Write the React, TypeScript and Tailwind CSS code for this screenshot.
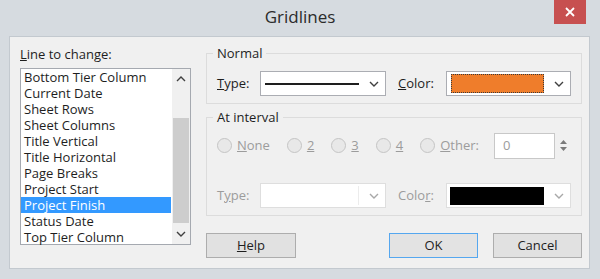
import React from 'react'

const items = [
  'Bottom Tier Column',
  'Current Date',
  'Sheet Rows',
  'Sheet Columns',
  'Title Vertical',
  'Title Horizontal',
  'Page Breaks',
  'Project Start',
  'Project Finish',
  'Status Date',
  'Top Tier Column',
]

function Chevron({ up = false, light = false }: { up?: boolean; light?: boolean }) {
  return (
    <svg width="10" height="6" viewBox="0 0 10 6" className={up ? 'rotate-180' : ''}>
      <path d="M1 1 L5 5 L9 1" fill="none" stroke={light ? '#a8a8a8' : '#404040'} strokeWidth="1.4" />
    </svg>
  )
}

function Radio({ u, rest }: { u: string; rest: string }) {
  return (
    <div className="flex items-center">
      <span className="w-[15px] h-[15px] rounded-full border border-[#c4c4c4] bg-[#e8e8e8]" />
      <span className="ml-[5px] text-[#9c9c9c]">
        <span className="underline">{u}</span>
        {rest}
      </span>
    </div>
  )
}

export default function App() {
  return (
    <div className="w-[600px] h-[279px] bg-[#d6dbe0] overflow-hidden flex flex-col text-[13px] text-[#1e1e1e] font-['Open_Sans',sans-serif]">
      {/* Title bar */}
      <div className="h-[36px] grid grid-cols-[1fr_auto_1fr] shrink-0">
        <div />
        <div className="pt-[6px] text-[17px] text-[#2b2b2b] leading-[22px]">Gridlines</div>
        <div className="flex justify-end pr-[14px]">
          <div className="w-[32px] h-[24px] bg-[#c75050] flex items-center justify-center">
            <svg width="10" height="10" viewBox="0 0 10 10">
              <path d="M1 1 L9 9 M9 1 L1 9" stroke="#fff" strokeWidth="1.8" />
            </svg>
          </div>
        </div>
      </div>

      {/* Client area */}
      <div className="ml-[9px] mr-[10px] h-[233px] bg-[#f0f0f0] border border-[#c3c9cf] flex pl-[10px] pr-[7px] gap-[15px]">
        {/* Left column */}
        <div className="w-[171px] flex flex-col">
          <div className="mt-[9px] h-[17px] leading-[17px]">
            <span className="underline">L</span>ine to change:
          </div>
          <div className="mt-[5px] h-[177px] border border-[#a5a9b0] bg-white flex">
            <div className="flex-1 flex flex-col">
              {items.map(it => (
                <div
                  key={it}
                  className={`h-[16px] leading-[16px] pl-[3px] ${it === 'Project Finish' ? 'bg-[#3399ff] text-white' : ''}`}
                >
                  {it}
                </div>
              ))}
            </div>
            <div className="w-[18px] ml-[1px] flex flex-col bg-[#f0f0f0]">
              <div className="h-[19px] flex items-center justify-center">
                <Chevron up />
              </div>
              <div className="h-[30px]" />
              <div className="h-[105px] bg-[#cdcdcd] mx-[1px]" />
              <div className="flex-1 flex items-center justify-center">
                <Chevron />
              </div>
            </div>
          </div>
        </div>

        {/* Right column */}
        <div className="w-[376px] flex flex-col">
          <fieldset className="mt-[8px] border border-[#dcdcdc] px-[10px] pt-[10px] pb-[7px]">
            <legend className="-ml-[4px] px-[4px] h-[16px] leading-[16px] text-[#1e1e1e]">Normal</legend>
            <div className="flex items-center">
              <div className="w-[43px]">
                <span className="underline">T</span>ype:
              </div>
              <div className="w-[126px] h-[25px] border border-[#abadb3] bg-white flex items-center pl-[4px] pr-[6px]">
                <div className="flex-1 h-[2px] bg-[#1e1e1e] mr-[10px]" />
                <Chevron />
              </div>
              <div className="ml-[12px] w-[48px]">
                <span className="underline">C</span>olor:
              </div>
              <div className="w-[125px] h-[25px] border border-[#abadb3] bg-white flex items-center pl-[4px] pr-[6px]">
                <div className="flex-1 h-[19px] bg-[#ef7d2b] border border-dotted border-[#3a3a3a] mr-[10px]" />
                <Chevron />
              </div>
            </div>
          </fieldset>

          <fieldset className="mt-[5px] border border-[#dcdcdc] pl-[10px] pr-[10px] pt-[8px] pb-[7px]">
            <legend className="-ml-[4px] px-[4px] h-[16px] leading-[16px] text-[#1e1e1e]">At interval</legend>
            <div className="flex items-center h-[25px]">
              <Radio u="N" rest="one" />
              <div className="ml-[17px]"><Radio u="2" rest="" /></div>
              <div className="ml-[17px]"><Radio u="3" rest="" /></div>
              <div className="ml-[17px]"><Radio u="4" rest="" /></div>
              <div className="ml-[17px]"><Radio u="O" rest="ther:" /></div>
              <div className="ml-[15px] w-[61px] h-[26px] border border-[#c8c8c8] bg-white flex items-center pl-[8px] text-[#9c9c9c]">
                0
              </div>
              <div className="ml-[2px] w-[13px] h-[24px] flex flex-col items-center justify-center gap-[3px]">
                <svg width="7" height="4" viewBox="0 0 7 4"><path d="M0 4 L3.5 0 L7 4Z" fill="#7a7a7a" /></svg>
                <svg width="7" height="4" viewBox="0 0 7 4"><path d="M0 0 L3.5 4 L7 0Z" fill="#7a7a7a" /></svg>
              </div>
            </div>
            <div className="flex items-center mt-[25px]">
              <div className="w-[43px] text-[#9c9c9c]">
                T<span className="underline">y</span>pe:
              </div>
              <div className="w-[126px] h-[25px] border border-[#dedede] bg-white flex items-center pl-[2px] pr-[6px]">
                <div className="flex-1 h-[19px] bg-white border-r border-[#ececec] mr-[10px]" />
                <Chevron light />
              </div>
              <div className="ml-[12px] w-[48px] text-[#9c9c9c]">
                Colo<span className="underline">r</span>:
              </div>
              <div className="w-[125px] h-[25px] border border-[#dedede] bg-white flex items-center pl-[3px] pr-[6px]">
                <div className="flex-1 h-[18px] bg-black mr-[10px]" />
                <Chevron light />
              </div>
            </div>
          </fieldset>

          <div className="mt-[17px] flex">
            <button className="w-[90px] h-[25px] border border-[#adadad] bg-[#e1e1e1] text-[#1e1e1e]">
              <span className="underline">H</span>elp
            </button>
            <button className="ml-auto w-[89px] h-[25px] border border-[#55a7ef] bg-[#e3e3e3] text-[#1e1e1e]">
              OK
            </button>
            <button className="ml-[15px] w-[89px] h-[25px] border border-[#adadad] bg-[#e1e1e1] text-[#1e1e1e]">
              Cancel
            </button>
          </div>
        </div>
      </div>
    </div>
  )
}
